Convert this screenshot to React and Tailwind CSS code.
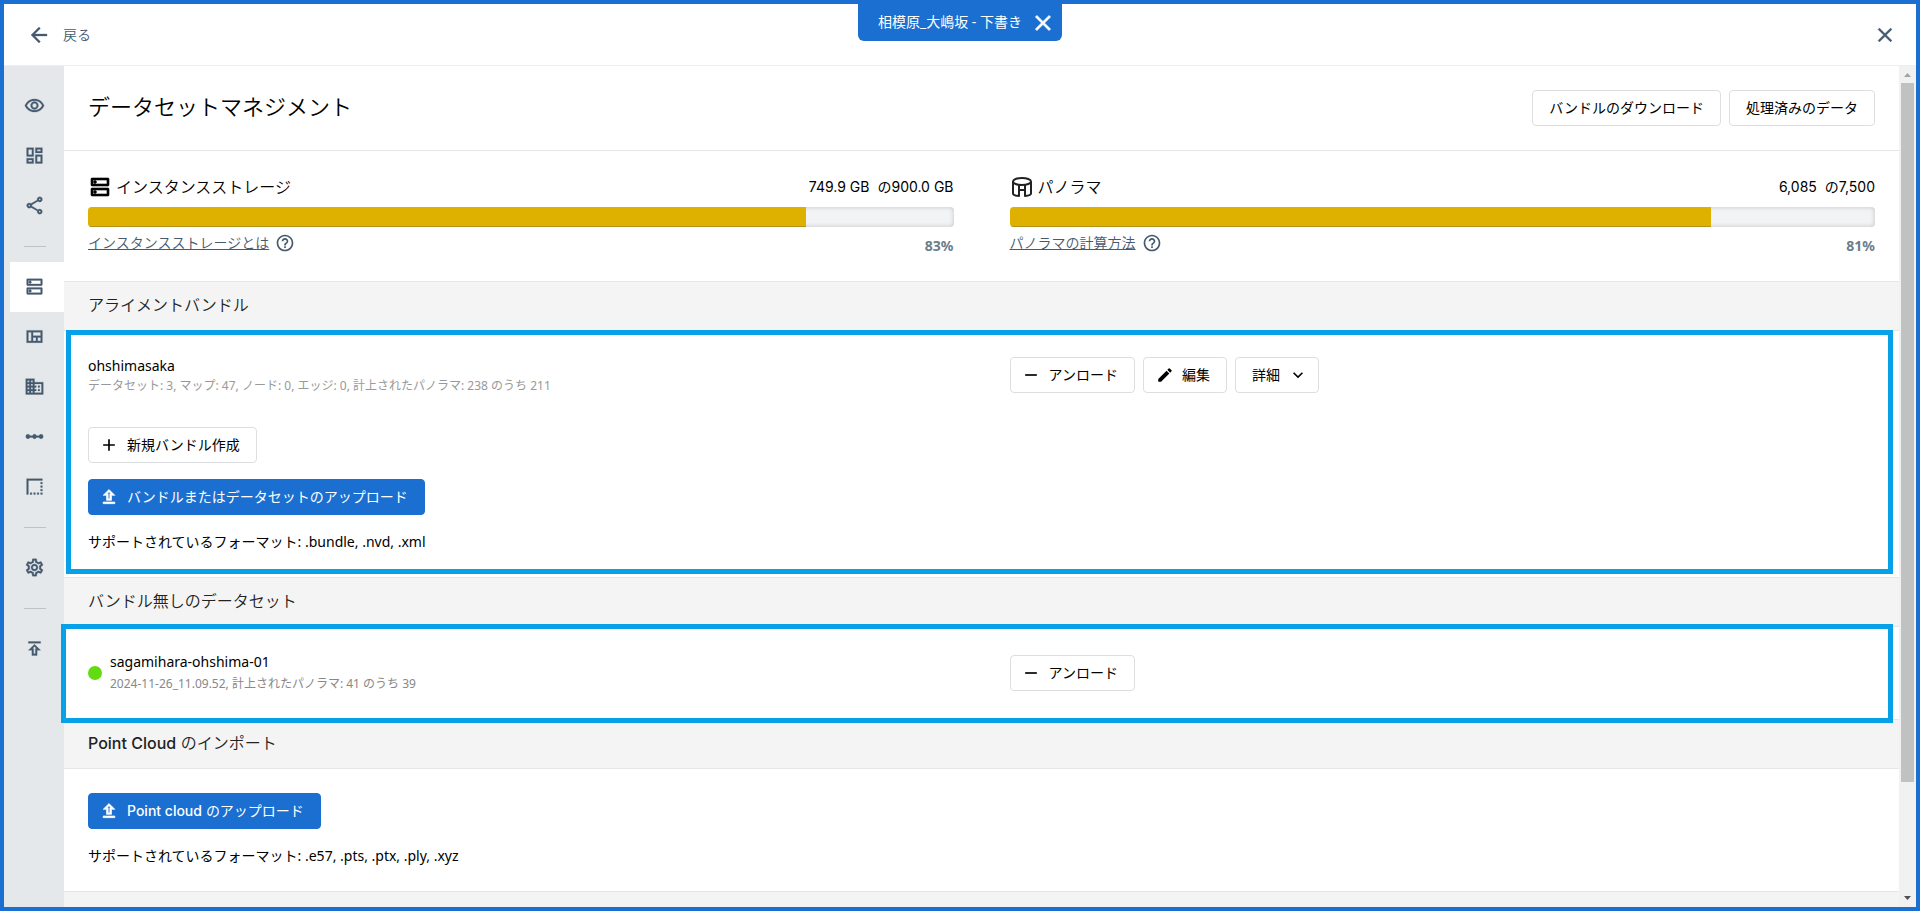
import { clsx } from "clsx";
import {
  MdAdd,
  MdArrowBack,
  MdBorderStyle,
  MdBusiness,
  MdClose,
  MdEdit,
  MdHelpOutline,
  MdKeyboardArrowDown,
  MdLinearScale,
  MdOutlineDashboard,
  MdOutlineDns,
  MdOutlinePublish,
  MdOutlineRemoveRedEye,
  MdOutlineSettings,
  MdOutlineShare,
  MdOutlineViewQuilt,
  MdRemove,
} from "react-icons/md";

const navGroups = [
  [
    { label: "表示", Icon: MdOutlineRemoveRedEye },
    { label: "ダッシュボード", Icon: MdOutlineDashboard },
    { label: "共有", Icon: MdOutlineShare },
  ],
  [
    { label: "データセット", Icon: MdOutlineDns, active: true },
    { label: "フロアプラン", Icon: MdOutlineViewQuilt },
    { label: "建物", Icon: MdBusiness },
    { label: "計測", Icon: MdLinearScale },
    { label: "クロップ", Icon: MdBorderStyle },
  ],
  [{ label: "設定", Icon: MdOutlineSettings }],
  [{ label: "公開", Icon: MdOutlinePublish }],
];

// Material icons carry an empty bounding path, keep the extra stroke off it
const boldIcon = "[&>path[fill=none]]:stroke-none";

function PanoramaIcon() {
  return (
    <svg
      width="24"
      height="24"
      viewBox="0 0 24 24"
      fill="none"
      stroke="#222"
      strokeWidth="2"
      strokeLinejoin="round"
    >
      <ellipse cx="12" cy="6.500" rx="9" ry="3.500" />
      <path d="M3 6.500V18.500c0 1.200 2.500 2.200 6 2.500V9.800" />
      <path d="M21 6.500V18.500c0 1.200-2.500 2.200-6 2.500V9.800" />
      <path d="M9 15h6" />
    </svg>
  );
}

function UploadIcon() {
  return (
    <svg
      width="20"
      height="20"
      viewBox="0 0 24 24"
      fill="currentColor"
      stroke="currentColor"
      strokeWidth="0.800"
      className="mr-2 -ml-1.5"
    >
      <path d="M9 16h6v-6h4l-7-7-7 7h4v6zm3-10.170L14.170 8H13v6h-2V8H9.830L12 5.830zM5 18h14v2H5z" />
    </svg>
  );
}

function Button({ primary, children }) {
  return (
    <button
      type="button"
      className={clsx(
        "flex h-9 items-center rounded border px-4 text-sm whitespace-nowrap",
        primary
          ? "border-[#1a6fd1] bg-[#1a6fd1] text-white"
          : "border-[#dcdfe2] bg-white text-black"
      )}
    >
      {children}
    </button>
  );
}

function Sidebar() {
  return (
    <nav className="w-15 shrink-0 bg-[#e4e8eb] pt-[15px] pl-1.5">
      {navGroups.map((group, i) => (
        <div key={i}>
          {i > 0 && (
            <div className="flex h-[31px] items-center pl-3.5">
              <div className="h-px w-[22px] bg-[#bcc4ca]" />
            </div>
          )}
          {group.map(({ label, Icon, active }) => (
            <button
              key={label}
              type="button"
              aria-label={label}
              className={clsx(
                "flex h-[50px] w-full items-center pb-px pl-3.5 text-[#455a6e]",
                active && "bg-white"
              )}
            >
              <Icon size={21} strokeWidth={0.3} className={boldIcon} />
            </button>
          ))}
        </div>
      ))}
    </nav>
  );
}

function Usage({ icon, title, used, total, percent, help }) {
  return (
    <div className="min-w-0 flex-1">
      <div className="flex h-6 items-center justify-between">
        <h2 className="flex items-center gap-1 text-base font-[350]">
          {icon}
          {title}
        </h2>
        <p className="flex gap-2 font-[Inter,'Noto_Sans_CJK_JP',sans-serif] text-sm">
          <span>{used}</span>
          <span>の{total}</span>
        </p>
      </div>
      <div className="mt-2 h-5 overflow-hidden rounded bg-[#f1f3f5] shadow-[inset_0_0_5px_rgba(0,0,0,0.2)]">
        <div
          className="h-full border-b border-[#b39216] bg-[#deb100]"
          style={{ width: `${percent}%` }}
        />
      </div>
      <div className="flex justify-between pt-1.5">
        <a
          href="#help"
          className="flex h-5 items-center gap-1.5 text-sm font-[350] text-[#455a6e]"
        >
          <span className="underline">{help}</span>
          <MdHelpOutline size={20} />
        </a>
        <span className="pt-[3px] text-sm leading-5 font-bold text-[#6b7d8c]">
          {percent}%
        </span>
      </div>
    </div>
  );
}

function SectionHeader({ children }) {
  return (
    <h2 className="flex h-[50px] shrink-0 items-center border-y border-[#e6e6e6] bg-[#f4f4f4] px-6 pb-0.5 text-base font-[350] text-[#222]">
      {children}
    </h2>
  );
}

function Scrollbar() {
  return (
    <div className="flex w-[17px] shrink-0 flex-col items-center bg-[#f1f1f1]">
      <svg width="17" height="17" viewBox="0 0 17 17">
        <path d="M5 11l3.500-4 3.500 4z" fill="#a3a3a3" />
      </svg>
      <div className="w-[13px] flex-[699] bg-[#c1c1c1]" />
      <div className="flex-[108]" />
      <svg width="17" height="17" viewBox="0 0 17 17">
        <path d="M5 6h7l-3.500 4z" fill="#505050" />
      </svg>
    </div>
  );
}

export default function App() {
  return (
    <div className="relative flex h-screen flex-col overflow-hidden border-4 border-[#1a6fd1] bg-white font-['Noto_Sans','Noto_Sans_CJK_JP',sans-serif] text-black">
      <header className="flex h-[62px] shrink-0 items-center justify-between border-b border-[#eee] pr-[19px] pl-[23px]">
        <button
          type="button"
          className="flex items-center gap-3 text-sm font-[350] text-[#455a6e]"
        >
          <MdArrowBack size={24} strokeWidth={0.3} className={boldIcon} />
          戻る
        </button>
        <button type="button" aria-label="閉じる" className="text-[#455a6e]">
          <MdClose size={24} strokeWidth={0.3} className={boldIcon} />
        </button>
      </header>

      {/* Site tab hanging from the top edge */}
      <div className="absolute top-0 left-1/2 flex h-[37px] -translate-x-1/2 items-center gap-2 rounded-b-md bg-[#1a6fd1] pr-1.5 pl-5 text-sm whitespace-nowrap text-white">
        <span className="pb-0.5">相模原_大嶋坂 - 下書き</span>
        <button type="button" aria-label="タブを閉じる">
          <MdClose size={26} strokeWidth={0.6} className={boldIcon} />
        </button>
      </div>

      <div className="flex min-h-0 flex-1">
        <Sidebar />

        <main className="flex min-w-0 flex-1 flex-col">
          <div className="flex h-[85px] shrink-0 items-center justify-between border-b border-[#e6e6e6] px-6">
            <h1 className="pb-1 text-[22px] font-[350]">
              データセットマネジメント
            </h1>
            <div className="flex gap-2">
              <Button>バンドルのダウンロード</Button>
              <Button>処理済みのデータ</Button>
            </div>
          </div>

          <div className="flex h-[130px] shrink-0 gap-14 px-6 pt-6">
            <Usage
              icon={
                <MdOutlineDns size={24} strokeWidth={0.6} className={boldIcon} />
              }
              title="インスタンスストレージ"
              used="749.9 GB"
              total="900.0 GB"
              percent={83}
              help="インスタンスストレージとは"
            />
            <Usage
              icon={<PanoramaIcon />}
              title="パノラマ"
              used="6,085"
              total="7,500"
              percent={81}
              help="パノラマの計算方法"
            />
          </div>

          <SectionHeader>アライメントバンドル</SectionHeader>
          <section className="relative shrink-0 px-6 pt-[26px] pb-6">
            <div className="pointer-events-none absolute -top-px right-1.5 bottom-[3px] left-0.5 border-[5px] border-[#06a1e6]" />
            <div className="flex gap-14">
              <div className="flex-1 pb-[30px]">
                <p className="text-sm leading-[18px]">ohshimasaka</p>
                <p className="text-xs leading-[22px] text-[#999]">
                  データセット: 3, マップ: 47, ノード: 0, エッジ: 0,
                  計上されたパノラマ: 238 のうち 211
                </p>
              </div>
              <div className="flex flex-1 items-start gap-2">
                <Button>
                  <MdRemove size={20} className="mr-2 -ml-1.5" />
                  アンロード
                </Button>
                <Button>
                  <MdEdit size={18} className="mr-2 -ml-1" />
                  編集
                </Button>
                <Button>
                  詳細
                  <MdKeyboardArrowDown size={20} className="-mr-1.5 ml-2" />
                </Button>
              </div>
            </div>
            <div className="flex flex-col items-start gap-4">
              <Button>
                <MdAdd size={20} className="mr-2 -ml-1.5" />
                新規バンドル作成
              </Button>
              <Button primary>
                <UploadIcon />
                バンドルまたはデータセットのアップロード
              </Button>
              <p className="text-sm leading-[22px]">
                サポートされているフォーマット: .bundle, .nvd, .xml
              </p>
            </div>
          </section>

          <SectionHeader>バンドル無しのデータセット</SectionHeader>
          <section className="relative z-10 flex h-[92px] shrink-0 items-center gap-14 px-6">
            <div className="pointer-events-none absolute -top-[3px] right-1.5 -bottom-1 -left-[3px] border-[5px] border-[#06a1e6]" />
            <div className="flex flex-1 items-center gap-2">
              <span className="size-3.5 rounded-full bg-[#62dc12]" />
              <div className="pb-0.5">
                <p className="text-sm leading-6">sagamihara-ohshima-01</p>
                <p className="text-xs leading-5 text-[#888]">
                  2024-11-26_11.09.52, 計上されたパノラマ: 41 のうち 39
                </p>
              </div>
            </div>
            <div className="flex flex-1">
              <Button>
                <MdRemove size={20} className="mr-2 -ml-1.5" />
                アンロード
              </Button>
            </div>
          </section>

          <SectionHeader>
            <span className="font-[Inter,'Noto_Sans_CJK_JP',sans-serif]">
              <span className="font-medium">Point Cloud</span> のインポート
            </span>
          </SectionHeader>
          <section className="flex shrink-0 flex-col items-start gap-4 px-6 py-6">
            <Button primary>
              <UploadIcon />
              <span className="font-[Inter,'Noto_Sans_CJK_JP',sans-serif]">
                <span className="font-medium">Point cloud</span> のアップロード
              </span>
            </Button>
            <p className="text-sm leading-[22px]">
              サポートされているフォーマット: .e57, .pts, .ptx, .ply, .xyz
            </p>
          </section>
          <div className="flex-1 border-t border-[#e6e6e6] bg-[#f4f4f4]" />
        </main>

        <Scrollbar />
      </div>
    </div>
  );
}
